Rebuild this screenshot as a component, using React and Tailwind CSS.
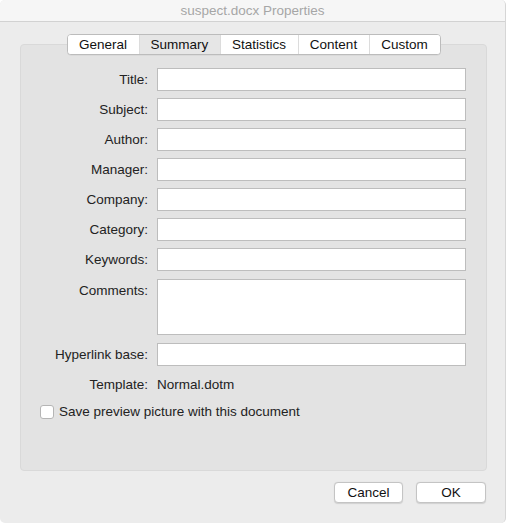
const fields = [
  { label: 'Title:' },
  { label: 'Subject:' },
  { label: 'Author:' },
  { label: 'Manager:' },
  { label: 'Company:' },
  { label: 'Category:' },
  { label: 'Keywords:' },
];

const tabs = ['General', 'Summary', 'Statistics', 'Content', 'Custom'];
const tabWidths = ['w-[71px]', 'w-[81px]', 'w-[78px]', 'w-[71px]', 'w-[71px]'];

function Field({ label }) {
  return (
    <div className="flex items-center h-[23px]">
      <div className="w-[127px] pt-[2px] text-right text-[13.5px] text-[#222]">{label}</div>
      <div className="ml-[9px] w-[309px] h-[23px] bg-white border border-[#bdbdbd]" />
    </div>
  );
}

export default function App() {
  return (
    <div
      className="w-[507px] h-[523px] bg-white"
      style={{ fontFamily: '"Liberation Sans", Arial, sans-serif' }}
    >
      <div className="w-[506px] h-[523px] bg-[#ececec] rounded-[5px] border-r border-[#d6d6d6] flex flex-col overflow-hidden">
        {/* Title bar */}
        <div className="h-[22px] pt-[1px] bg-[#f6f6f6] border-b border-[#d2d2d2] flex items-center justify-center text-[13.5px] text-[#a6a6a6]">
          suspect.docx Properties
        </div>

        {/* Tab box */}
        <div className="ml-[20px] mt-[22px] w-[467px] h-[427px] bg-[#e3e3e3] border border-[#d9d9d9] rounded-[4px] flex flex-col">
          <div className="-mt-[11px] flex justify-center">
            <div className="flex h-[21px] bg-white border border-[#bcbcbc] rounded-[4px] overflow-hidden shadow-[0_0.5px_0.5px_rgba(0,0,0,0.08)]">
              {tabs.map((t, i) => (
                <div
                  key={t}
                  className={
                    tabWidths[i] +
                    ' pt-[2px] flex items-center justify-center text-[13.5px] text-[#111] ' +
                    (i > 0 ? 'border-l border-[#dcdcdc] ' : '') +
                    (t === 'Summary' ? 'bg-[#e6e6e6]' : 'bg-white')
                  }
                >
                  {t}
                </div>
              ))}
            </div>
          </div>

          <div className="mt-[13px] flex flex-col gap-[7px]">
            {fields.map((f) => (
              <Field key={f.label} label={f.label} />
            ))}
            <div className="flex mt-[1px]">
              <div className="w-[127px] text-right text-[13.5px] text-[#222] pt-[2px]">Comments:</div>
              <div className="ml-[9px] w-[309px] h-[56px] bg-white border border-[#bdbdbd]" />
            </div>
            <div className="mt-[1px]">
              <Field label="Hyperlink base:" />
            </div>
            <div className="flex items-center h-[20px] mt-[1px] pt-[2px]">
              <div className="w-[127px] text-right text-[13.5px] text-[#222]">Template:</div>
              <div className="ml-[9px] text-[13.5px] text-[#222]">Normal.dotm</div>
            </div>
            <div className="flex items-center ml-[19px]">
              <div className="w-[14px] h-[14px] bg-white border border-[#b5b5b5] rounded-[3px]" />
              <div className="ml-[5px] pt-[1px] text-[13.5px] text-[#222]">Save preview picture with this document</div>
            </div>
          </div>
        </div>

        {/* Buttons */}
        <div className="mt-[11px] flex justify-end gap-[13px] pr-[19px]">
          <div className="w-[69px] h-[21px] pt-[2px] bg-white border border-[#c4c4c4] rounded-[4px] flex items-center justify-center text-[13.5px] text-[#111] shadow-[0_0.5px_1px_rgba(0,0,0,0.12)]">
            Cancel
          </div>
          <div className="w-[70px] h-[21px] pt-[2px] bg-white border border-[#c4c4c4] rounded-[4px] flex items-center justify-center text-[13.5px] text-[#111] shadow-[0_0.5px_1px_rgba(0,0,0,0.12)]">
            OK
          </div>
        </div>
      </div>
    </div>
  );
}
